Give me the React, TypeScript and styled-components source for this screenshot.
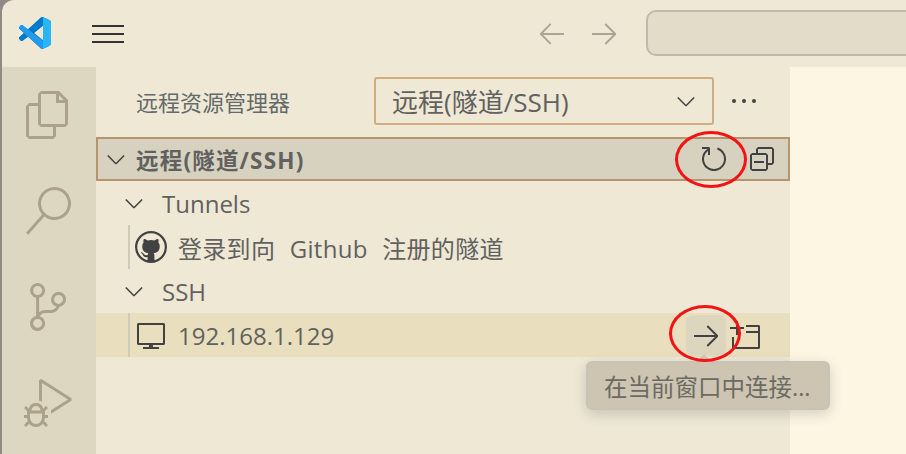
import styled, { createGlobalStyle } from 'styled-components';
import {
    VscArrowLeft,
    VscArrowRight,
    VscChevronDown,
    VscCollapseAll,
    VscDebugAlt,
    VscEllipsis,
    VscEmptyWindow,
    VscFiles,
    VscGithub,
    VscMenu,
    VscRefresh,
    VscSearch,
    VscSourceControl,
    VscVm,
} from 'react-icons/vsc';

const TEXT = '#616160';
const ICON = '#424242';
const FONT = '"Open Sans", "Noto Sans CJK SC", sans-serif';

const GlobalStyle = createGlobalStyle`
    html, body {
        margin: 0;
        padding: 0;
        background: #8f8b84;
    }
    body {
        width: 906px;
        height: 454px;
        overflow: hidden;
        font-family: ${FONT};
    }
`;

const Frame = styled.div`
    position: relative;
    margin-left: 2px;
    width: 904px;
    height: 454px;
    display: flex;
    flex-direction: column;
    background: #eee8d5;
    border-top-left-radius: 12px;
    overflow: hidden;
`;

const TitleBar = styled.header`
    height: 67px;
    flex: none;
    display: flex;
    align-items: center;
    padding: 0 0 2px 17px;
    box-sizing: border-box;
    & > * {
        flex: none;
    }
`;

const MenuIcon = styled(VscMenu)`
    font-size: 32px;
    color: #333333;
    margin-left: 41px;
`;

const NavGroup = styled.div`
    display: flex;
    gap: 20px;
    margin-left: 412px;
    color: #aaa596;
    font-size: 32px;
`;

const CommandCenter = styled.div`
    width: 300px;
    height: 46px;
    box-sizing: border-box;
    margin-left: 26px;
    background: #e3dcc9;
    border: 2px solid #c0baa9;
    border-radius: 10px;
`;

const Body = styled.div`
    flex: 1;
    display: flex;
    min-height: 0;
`;

const ActivityBar = styled.nav`
    width: 94px;
    flex: none;
    background: #ddd6c1;
    color: #aca18a;
    display: flex;
    flex-direction: column;
    font-size: 48px;
`;

const ActivityItem = styled.div`
    height: 96px;
    flex: none;
    display: flex;
    align-items: center;
    justify-content: center;
    padding-right: 2px;
    box-sizing: border-box;
`;

const SideBar = styled.aside`
    width: 694px;
    flex: none;
    display: flex;
    flex-direction: column;
`;

const SideHeader = styled.div`
    height: 70px;
    flex: none;
    display: flex;
    align-items: center;
    padding-left: 40px;
    padding-bottom: 2px;
    box-sizing: border-box;
`;

const SideTitle = styled.span`
    width: 238px;
    font-size: 22px;
    color: #646a6b;
`;

const Picker = styled.div`
    width: 340px;
    height: 48px;
    box-sizing: border-box;
    display: flex;
    align-items: center;
    justify-content: space-between;
    padding: 0 12px 0 16px;
    border: 2px solid #d0ad80;
    border-radius: 3px;
    font-size: 26px;
    color: ${TEXT};
`;

const PickerChevron = styled(VscChevronDown)`
    font-size: 28px;
    color: ${ICON};
`;

const MoreIcon = styled(VscEllipsis)`
    font-size: 32px;
    color: ${ICON};
    margin-left: 14px;
`;

const SectionRow = styled.div`
    height: 44px;
    flex: none;
    box-sizing: border-box;
    display: flex;
    align-items: center;
    padding: 0 6px 0 4px;
    background: #d6d2bf;
    border: 2px solid #b5946f;
    font-size: 22.5px;
    font-weight: 700;
    letter-spacing: 1.2px;
    color: ${TEXT};
`;

const Chevron = styled(VscChevronDown)`
    font-size: 28px;
    color: ${ICON};
    flex: none;
`;

const SectionLabel = styled.span`
    flex: 1;
    margin-left: 6px;
`;

const ActionGroup = styled.div<{ $gap: number }>`
    display: flex;
    gap: ${(p) => p.$gap}px;
`;

const ActionButton = styled.div<{ $hover?: boolean }>`
    width: 40px;
    height: 40px;
    display: flex;
    align-items: center;
    justify-content: center;
    font-size: 32px;
    color: ${ICON};
    border-radius: 6px;
    background: ${(p) => (p.$hover ? '#ddd6bf' : 'transparent')};
`;

const TreeRow = styled.div<{ $selected?: boolean }>`
    height: 44px;
    flex: none;
    display: flex;
    align-items: center;
    font-size: 24px;
    color: ${TEXT};
    background: ${(p) => (p.$selected ? '#e9dfbf' : 'transparent')};
`;

const GroupRow = styled(TreeRow)`
    padding-left: 24px;
`;

const GroupLabel = styled.span`
    margin-left: 14px;
`;

const LeafRow = styled(TreeRow)`
    padding-left: 32px;
    padding-right: 24px;
`;

const IndentGuide = styled.div`
    width: 2px;
    height: 44px;
    flex: none;
    background: #d0cabb;
`;

const LeafIcon = styled.span`
    width: 44px;
    flex: none;
    display: flex;
    justify-content: center;
    padding-right: 2px;
    box-sizing: border-box;
    font-size: 32px;
    color: ${ICON};
`;

const LeafLabel = styled.span`
    flex: 1;
    padding-left: 4px;
`;

const TunnelLabel = styled(LeafLabel)`
    letter-spacing: 0.3px;
    word-spacing: 8px;
`;

const Editor = styled.main`
    flex: 1;
    background: #fdf6e3;
`;

const Tooltip = styled.div`
    position: absolute;
    left: 584px;
    top: 361px;
    width: 244px;
    height: 49px;
    box-sizing: border-box;
    display: flex;
    align-items: center;
    padding-left: 16px;
    white-space: nowrap;
    background: #cdc4b2;
    border: 2px solid #c8c3b6;
    border-radius: 6px;
    box-shadow: 0 4px 14px rgba(0, 0, 0, 0.16);
    font-size: 23.5px;
    color: #6b6a63;
    &::before {
        content: '';
        position: absolute;
        left: 108px;
        top: -9px;
        border: 8px solid transparent;
        border-top: 0;
        border-bottom: 8px solid #cbc5b6;
    }
`;

const Annotation = styled.div<{ $left: number; $top: number }>`
    position: absolute;
    left: ${(p) => p.$left}px;
    top: ${(p) => p.$top}px;
    width: 72px;
    height: 57px;
    box-sizing: border-box;
    border: 3px solid #f21414;
    border-radius: 50%;
`;

const VsCodeLogo = () => (
    <svg width="32" height="32" viewBox="0 0 100 100">
        <path
            d="M96 11 75 1a6 6 0 0 0-7 1L28 39 11 26a4 4 0 0 0-5 0l-5 5a4 4 0 0 0 0 6l15 13L1 63a4 4 0 0 0 0 6l5 5a4 4 0 0 0 5 0l17-13 40 37a6 6 0 0 0 7 1l21-10a6 6 0 0 0 4-6V17a6 6 0 0 0-4-6Z"
            fill="#0065a9"
        />
        <path
            d="M75 1a6 6 0 0 0-7 1L1 63a4 4 0 0 0 0 6l5 5a4 4 0 0 0 5 0L96 10 75 1Z"
            fill="#007acc"
        />
        <path
            d="M75 99a6 6 0 0 1-7-1L1 37a4 4 0 0 1 0-6l5-5a4 4 0 0 1 5 0l85 64-21 9Z"
            fill="#1f9cf0"
        />
        <path
            d="M75 99a6 6 0 0 1-7-1c3 3 7 1 7-2V4c0-3-4-5-7-2a6 6 0 0 1 7-1l21 10a6 6 0 0 1 4 6v66a6 6 0 0 1-4 6L75 99Z"
            fill="#29b6f6"
        />
        <path d="M75 27 47 50l28 23V27Z" fill="#eee8d5" />
    </svg>
);

export default function App() {
    return (
        <>
            <GlobalStyle />
            <Frame>
                <TitleBar>
                    <VsCodeLogo />
                    <MenuIcon />
                    <NavGroup>
                        <VscArrowLeft />
                        <VscArrowRight />
                    </NavGroup>
                    <CommandCenter />
                </TitleBar>
                <Body>
                    <ActivityBar>
                        <ActivityItem><VscFiles /></ActivityItem>
                        <ActivityItem><VscSearch /></ActivityItem>
                        <ActivityItem><VscSourceControl /></ActivityItem>
                        <ActivityItem><VscDebugAlt /></ActivityItem>
                    </ActivityBar>
                    <SideBar>
                        <SideHeader>
                            <SideTitle>远程资源管理器</SideTitle>
                            <Picker>
                                远程(隧道/SSH)
                                <PickerChevron />
                            </Picker>
                            <MoreIcon />
                        </SideHeader>
                        <SectionRow>
                            <Chevron />
                            <SectionLabel>远程(隧道/SSH)</SectionLabel>
                            <ActionGroup $gap={8}>
                                <ActionButton><VscRefresh /></ActionButton>
                                <ActionButton><VscCollapseAll /></ActionButton>
                            </ActionGroup>
                        </SectionRow>
                        <GroupRow>
                            <Chevron />
                            <GroupLabel>Tunnels</GroupLabel>
                        </GroupRow>
                        <LeafRow>
                            <IndentGuide />
                            <LeafIcon><VscGithub /></LeafIcon>
                            <TunnelLabel>登录到向 Github 注册的隧道</TunnelLabel>
                        </LeafRow>
                        <GroupRow>
                            <Chevron />
                            <GroupLabel>SSH</GroupLabel>
                        </GroupRow>
                        <LeafRow $selected>
                            <IndentGuide />
                            <LeafIcon><VscVm /></LeafIcon>
                            <LeafLabel>192.168.1.129</LeafLabel>
                            <ActionGroup $gap={0}>
                                <ActionButton $hover><VscArrowRight /></ActionButton>
                                <ActionButton><VscEmptyWindow /></ActionButton>
                            </ActionGroup>
                        </LeafRow>
                    </SideBar>
                    <Editor />
                </Body>
                <Tooltip>在当前窗口中连接...</Tooltip>
                <Annotation $left={673} $top={131} />
                <Annotation $left={667} $top={305} />
            </Frame>
        </>
    );
}
